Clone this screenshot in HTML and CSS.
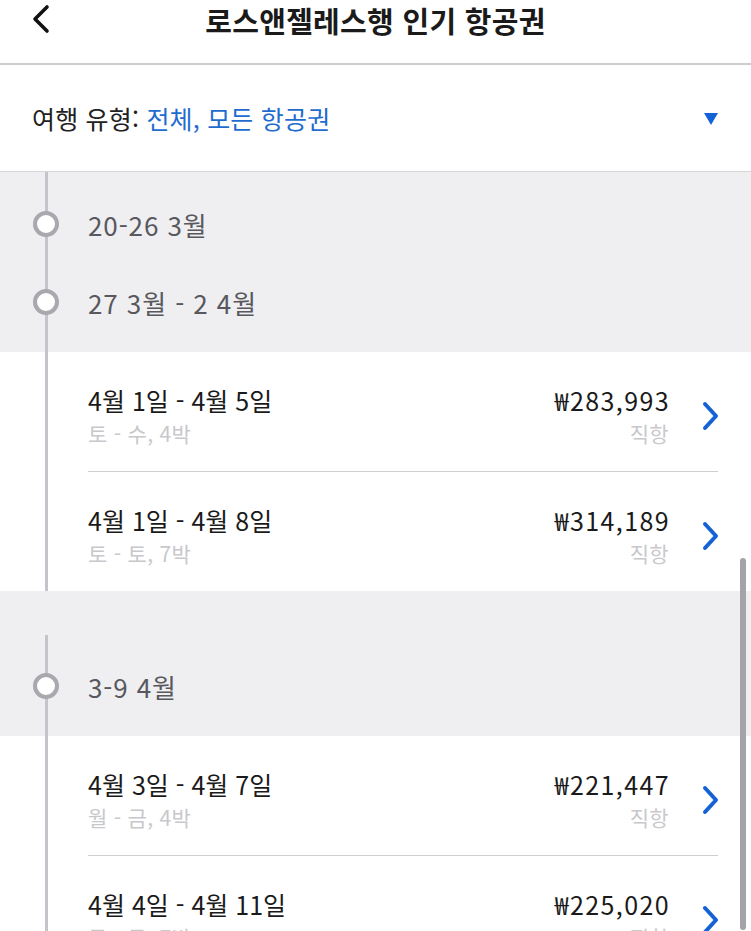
FILE: index.html
```html
<!DOCTYPE html>
<html lang="ko">

<head>
    <meta charset="UTF-8">
    <meta name="viewport" content="width=device-width, initial-scale=1.0">
    <title>로스앤젤레스행 인기 항공권</title>
    <link rel="stylesheet" href="styles.css">
</head>

<body>
    <header class="top-bar">
        <a class="back-btn" href="#">
            <svg width="20" height="30" viewBox="0 0 20 30">
                <path d="M16 3 L4 15 L16 27" fill="none" stroke="#111" stroke-width="3.6" stroke-linecap="round" stroke-linejoin="round"/>
            </svg>
        </a>
        <h1 class="page-title">로스앤젤레스행 인기 항공권</h1>
    </header>

    <div class="filter">
        <div class="filter-text">여행 유형: <span class="filter-value">전체, 모든 항공권</span></div>
        <svg class="filter-arrow" width="16" height="14" viewBox="0 0 16 14">
            <path d="M1 1 H15 L8 13 Z" fill="#1463d6"/>
        </svg>
    </div>

    <section class="week-group">
        <div class="weeks">
            <div class="week"><span class="dot"></span>20-26 3월</div>
            <div class="week"><span class="dot"></span>27 3월 - 2 4월</div>
        </div>
        <div class="trips">
            <a class="trip" href="#">
                <div class="trip-dates">
                    <div class="trip-title">4월 1일 - 4월 5일</div>
                    <div class="trip-sub">토 - 수, 4박</div>
                </div>
                <div class="trip-price">
                    <div class="price">₩283,993</div>
                    <div class="trip-sub">직항</div>
                </div>
                <svg class="go" width="20" height="30" viewBox="0 0 20 30">
                    <path d="M5 3 L16 15 L5 27" fill="none" stroke="#1463d6" stroke-width="4" stroke-linecap="round" stroke-linejoin="round"/>
                </svg>
            </a>
            <a class="trip" href="#">
                <div class="trip-dates">
                    <div class="trip-title">4월 1일 - 4월 8일</div>
                    <div class="trip-sub">토 - 토, 7박</div>
                </div>
                <div class="trip-price">
                    <div class="price">₩314,189</div>
                    <div class="trip-sub">직항</div>
                </div>
                <svg class="go" width="20" height="30" viewBox="0 0 20 30">
                    <path d="M5 3 L16 15 L5 27" fill="none" stroke="#1463d6" stroke-width="4" stroke-linecap="round" stroke-linejoin="round"/>
                </svg>
            </a>
        </div>
    </section>

    <section class="week-group">
        <div class="weeks weeks-gap">
            <div class="week"><span class="dot"></span>3-9 4월</div>
        </div>
        <div class="trips">
            <a class="trip" href="#">
                <div class="trip-dates">
                    <div class="trip-title">4월 3일 - 4월 7일</div>
                    <div class="trip-sub">월 - 금, 4박</div>
                </div>
                <div class="trip-price">
                    <div class="price">₩221,447</div>
                    <div class="trip-sub">직항</div>
                </div>
                <svg class="go" width="20" height="30" viewBox="0 0 20 30">
                    <path d="M5 3 L16 15 L5 27" fill="none" stroke="#1463d6" stroke-width="4" stroke-linecap="round" stroke-linejoin="round"/>
                </svg>
            </a>
            <a class="trip" href="#">
                <div class="trip-dates">
                    <div class="trip-title">4월 4일 - 4월 11일</div>
                    <div class="trip-sub">목 - 목, 7박</div>
                </div>
                <div class="trip-price">
                    <div class="price">₩225,020</div>
                    <div class="trip-sub">직항</div>
                </div>
                <svg class="go" width="20" height="30" viewBox="0 0 20 30">
                    <path d="M5 3 L16 15 L5 27" fill="none" stroke="#1463d6" stroke-width="4" stroke-linecap="round" stroke-linejoin="round"/>
                </svg>
            </a>
        </div>
    </section>

    <div class="scroll-thumb"></div>
</body>

</html>
```

FILE: styles.css
```css
html,
body {
    height: 931px;
    overflow: hidden;
}

body {
    margin: 0;
    padding: 0;
    font-family: 'Noto Sans CJK KR', 'Noto Sans', sans-serif;
    background-color: #fff;
    color: #1c1c1e;
}

a {
    color: inherit;
    text-decoration: none;
}

.top-bar {
    height: 63px;
    display: flex;
    align-items: flex-start;
    justify-content: center;
    border-bottom: 2px solid #cdcdd1;
}

.back-btn {
    position: absolute;
    left: 31px;
    top: 4px;
}

.page-title {
    margin: 0;
    font-size: 29px;
    line-height: 40px;
    font-weight: 700;
    color: #1a1a1a;
    letter-spacing: 0.3px;
}

.filter {
    height: 106px;
    display: flex;
    align-items: center;
    justify-content: space-between;
    padding: 0 32px 0 32px;
    border-bottom: 1px solid #d6d6da;
}

.filter-text {
    font-size: 25px;
    color: #222;
    letter-spacing: 0.2px;
}

.filter-value {
    color: #1f6ccf;
}

.filter-arrow {
    margin-top: 2px;
}

.weeks {
    background: linear-gradient(#c3c5cb, #c3c5cb) 45px 0 / 3px 100% no-repeat, #efeff1;
    padding: 13px 0 11px;
}

.weeks-gap {
    background: linear-gradient(#c3c5cb, #c3c5cb) 45px 44px / 3px 100% no-repeat, #efeff1;
    padding-top: 56px;
}

.week {
    height: 78px;
    display: flex;
    align-items: center;
    gap: 29px;
    padding-left: 33px;
    font-size: 26px;
    color: #58585e;
    letter-spacing: 0.9px;
}

.dot {
    width: 18px;
    height: 18px;
    border: 4px solid #a9a8ae;
    border-radius: 50%;
    background-color: #fff;
}

.trips {
    background: linear-gradient(#c3c5cb, #c3c5cb) 45px 0 / 3px 100% no-repeat, #fff;
    padding: 0 31px 0 88px;
}

.trip {
    height: 119px;
    display: flex;
    align-items: flex-start;
    border-bottom: 1px solid #cfcfd3;
    margin-right: 2px;
}

.trip:last-child {
    border-bottom: none;
}

.trip-dates {
    flex: 1;
    padding-top: 33px;
}

.trip-title {
    font-size: 25px;
    line-height: 30px;
    color: #1a1a1a;
}

.price {
    font-size: 25px;
    line-height: 30px;
    color: #1a1a1a;
    letter-spacing: 1.4px;
    margin-right: -1px;
}

.trip-sub {
    margin-top: 3px;
    font-size: 21px;
    line-height: 30px;
    color: #c8c8cc;
    letter-spacing: 0.3px;
}

.trip-price {
    padding-top: 33px;
    text-align: right;
}

.go {
    margin: 49px -2px 0 31px;
}

.scroll-thumb {
    position: absolute;
    left: 740px;
    top: 558px;
    width: 6px;
    height: 372px;
    border-radius: 3px;
    background-color: #a4a4a8;
}
```
